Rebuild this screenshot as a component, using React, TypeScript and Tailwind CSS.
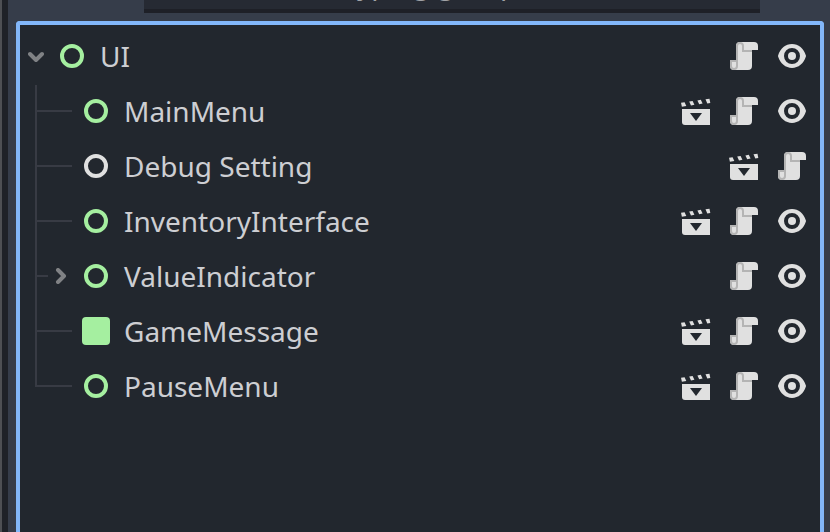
type Node = {
  name: string;
  shape: 'ring' | 'square';
  muted?: boolean;
  folded?: boolean;
  tools: ToolKind[];
};
type ToolKind = 'scene' | 'script' | 'eye';

const nodes: Node[] = [
  { name: 'MainMenu', shape: 'ring', tools: ['scene', 'script', 'eye'] },
  { name: 'Debug Setting', shape: 'ring', muted: true, tools: ['scene', 'script'] },
  { name: 'InventoryInterface', shape: 'ring', tools: ['scene', 'script', 'eye'] },
  { name: 'ValueIndicator', shape: 'ring', folded: true, tools: ['script', 'eye'] },
  { name: 'GameMessage', shape: 'square', tools: ['scene', 'script', 'eye'] },
  { name: 'PauseMenu', shape: 'ring', tools: ['scene', 'script', 'eye'] },
];

function SceneIcon() {
  return (
    <svg className="size-8" viewBox="0 0 16 16" fill="#e0e0e0">
      <path d="M1 7h14v8H2.5A1.5 1.5 0 0 1 1 13.5z" />
      <path d="M5 9h6l-3 4z" fill="#22272e" />
      <path d="M.5 3.9l1.8-.3.85 1.9-2.2.35zM4.6 3.3l1.7-.3.9 1.9-1.7.3zM8.7 2.7l1.7-.3.9 1.9-1.7.3zM12.75 2.15l2-.25.4 2.05-1.5.25z" />
    </svg>
  );
}

function ScriptIcon() {
  return (
    <svg className="size-8" viewBox="0 0 16 16">
      <path fill="#e0e0e0" d="M6 1a2 2 0 0 0-2 2v7H1v3a2 2 0 0 0 2 2h7a2 2 0 0 0 2-2V5h3V3a2 2 0 0 0-2-2z" />
      <path
        fill="#b4b4b4"
        d="M6 1a2 2 0 0 0-2 2v10a1 1 0 0 1-2 0v-2h2v-1H1v3a2 2 0 0 0 4 0V3a1 1 0 0 1 2 0v3h5V5H8V3a2 2 0 0 0-2-2z"
      />
    </svg>
  );
}

function EyeIcon() {
  return (
    <svg className="size-8" viewBox="0 0 16 16" fill="#e0e0e0">
      <path
        fillRule="evenodd"
        d="M8 2C4.8 2 2.1 4.2 1.05 7.7a1 1 0 0 0 0 .6C2.1 11.8 4.8 14 8 14s5.9-2.2 6.95-5.7a1 1 0 0 0 0-.6C13.9 4.2 11.2 2 8 2zm0 2a4 4 0 1 1 0 8 4 4 0 0 1 0-8z"
      />
      <circle cx="8" cy="8" r="2" />
    </svg>
  );
}

function Chevron({ folded }: { folded?: boolean }) {
  return (
    <svg
      className="size-4 shrink-0"
      viewBox="0 0 16 16"
      fill="none"
      stroke="#808285"
      strokeWidth="4"
      strokeLinecap="round"
      strokeLinejoin="round"
    >
      <path d={folded ? 'M6 2l6 6-6 6' : 'M2 6l6 6 6-6'} />
    </svg>
  );
}

function Tool({ kind }: { kind: ToolKind }) {
  if (kind === 'scene') return <SceneIcon />;
  if (kind === 'script') return <ScriptIcon />;
  return <EyeIcon />;
}

function Tools({ kinds }: { kinds: ToolKind[] }) {
  return (
    <div className="ml-auto mr-3 flex gap-4">
      {kinds.map((k) => (
        <Tool key={k} kind={k} />
      ))}
    </div>
  );
}

function Shape({ shape, muted }: { shape: 'ring' | 'square'; muted?: boolean }) {
  return (
    <div className="flex size-8 shrink-0 items-center justify-center">
      {shape === 'square' ? (
        <div className="size-7 rounded-[4px] bg-[#a5efa0]" />
      ) : (
        <div className={`size-6 rounded-full border-4 ${muted ? 'border-[#e0e0e0]' : 'border-[#a5efa0]'}`} />
      )}
    </div>
  );
}

function Guide({ first, last, short }: { first: boolean; last: boolean; short?: boolean }) {
  return (
    <div
      className={`ml-[15px] shrink-0 self-start border-l-2 border-[#383b44] ${short ? 'w-[13px]' : 'w-[37px]'} ${
        first ? 'mt-px h-[54px] pt-[25px]' : last ? 'h-7 pt-[26px]' : 'h-[55px] pt-[26px]'
      }`}
    >
      <div className="h-0.5 bg-[#383b44]" />
    </div>
  );
}

export default function App() {
  return (
    <div className="flex h-[532px] w-[830px] overflow-hidden bg-[#363d4a] font-['Noto_Sans',sans-serif] text-[28px] leading-8 text-[#cdced2]">
      <div className="w-0.5 bg-[#4e5054]" />
      <div className="w-1.5 bg-[#1f2228]" />
      <div className="flex flex-1 flex-col pl-2 pr-1.5">
        <div className="mb-2 ml-32 flex h-[13px] w-[616px] shrink-0 items-end justify-center overflow-hidden border-b-4 border-[#1e2027] bg-[#262a33]">
          <span className="mb-[10px] mr-[40px] text-[#a0a2a6]">typing group</span>
        </div>
        <div className="flex-1 rounded-t-[4px] border-4 border-b-0 border-[#82b7fa] bg-[#22272e] pt-1">
          <div className="flex h-[55px] items-center pb-px">
            <div className="ml-2">
              <Chevron />
            </div>
            <div className="ml-3">
              <Shape shape="ring" />
            </div>
            <span className="ml-3">UI</span>
            <Tools kinds={['script', 'eye']} />
          </div>
          {nodes.map((n, i) => (
            <div key={n.name} className="flex h-[55px] items-center">
              <Guide first={i === 0} last={i === nodes.length - 1} short={n.folded} />
              <div className="flex flex-1 items-center pb-px">
                {n.folded && (
                  <div className="ml-1 mr-3">
                    <Chevron folded />
                  </div>
                )}
                <div className={n.folded ? '' : 'ml-2'}>
                  <Shape shape={n.shape} muted={n.muted} />
                </div>
                <span className="ml-3 whitespace-pre">{n.name}</span>
                <Tools kinds={n.tools} />
              </div>
            </div>
          ))}
        </div>
      </div>
    </div>
  );
}
